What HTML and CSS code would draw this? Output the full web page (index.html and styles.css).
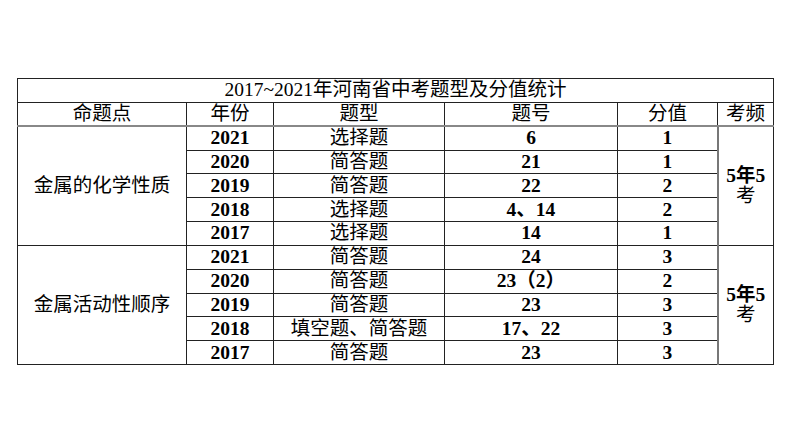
FILE: index.html
```html
<!DOCTYPE html>
<html lang="zh-CN">
<head>
<meta charset="utf-8">
<title>2017~2021年河南省中考题型及分值统计</title>
<link rel="stylesheet" href="styles.css">
</head>
<body>
<table class="stats">
  <colgroup>
    <col class="c1"><col class="c2"><col class="c3"><col class="c4"><col class="c5"><col class="c6">
  </colgroup>
  <tr class="title"><td colspan="6">2017~2021年河南省中考题型及分值统计</td></tr>
  <tr class="head">
    <td>命题点</td><td>年份</td><td>题型</td><td>题号</td><td>分值</td><td>考频</td>
  </tr>
  <tr>
    <td rowspan="5">金属的化学性质</td>
    <td class="b">2021</td><td>选择题</td><td class="b">6</td><td class="b">1</td>
    <td rowspan="5" class="freq"><span class="b">5年5</span><br>考</td>
  </tr>
  <tr><td class="b">2020</td><td>简答题</td><td class="b">21</td><td class="b">1</td></tr>
  <tr><td class="b">2019</td><td>简答题</td><td class="b">22</td><td class="b">2</td></tr>
  <tr><td class="b">2018</td><td>选择题</td><td class="b">4、14</td><td class="b">2</td></tr>
  <tr><td class="b">2017</td><td>选择题</td><td class="b">14</td><td class="b">1</td></tr>
  <tr>
    <td rowspan="5">金属活动性顺序</td>
    <td class="b">2021</td><td>简答题</td><td class="b">24</td><td class="b">3</td>
    <td rowspan="5" class="freq"><span class="b">5年5</span><br>考</td>
  </tr>
  <tr><td class="b">2020</td><td>简答题</td><td class="b">23（2）</td><td class="b">2</td></tr>
  <tr><td class="b">2019</td><td>简答题</td><td class="b">23</td><td class="b">3</td></tr>
  <tr><td class="b">2018</td><td>填空题、简答题</td><td class="b">17、22</td><td class="b">3</td></tr>
  <tr><td class="b">2017</td><td>简答题</td><td class="b">23</td><td class="b">3</td></tr>
</table>
</body>
</html>
```

FILE: styles.css
```css
html, body {
  margin: 0;
  padding: 0;
  background: #fff;
}
body {
  padding: 78px 0 0 17px;
  font-family: "Liberation Serif", "Noto Sans CJK SC", serif;
  font-size: 19.5px;
  color: #000;
}
.stats {
  border-collapse: collapse;
  table-layout: fixed;
  width: 756px;
  border: 1px solid #000;
}
.c1 { width: 169px; }
.c2 { width: 87px; }
.c3 { width: 171px; }
.c4 { width: 173px; }
.c5 { width: 100px; }
.c6 { width: 56px; }
.stats td {
  border: 1px solid #222;
  padding: 0;
  text-align: center;
  vertical-align: middle;
  line-height: 20px;
  white-space: nowrap;
}
.stats tr {
  height: 23.85px;
}
.head td {
  border-bottom: 2px solid #888;
}
.b {
  font-weight: bold;
}
.stats td.freq {
  line-height: 20px;
  border-left: 2px solid #777;
}
```
